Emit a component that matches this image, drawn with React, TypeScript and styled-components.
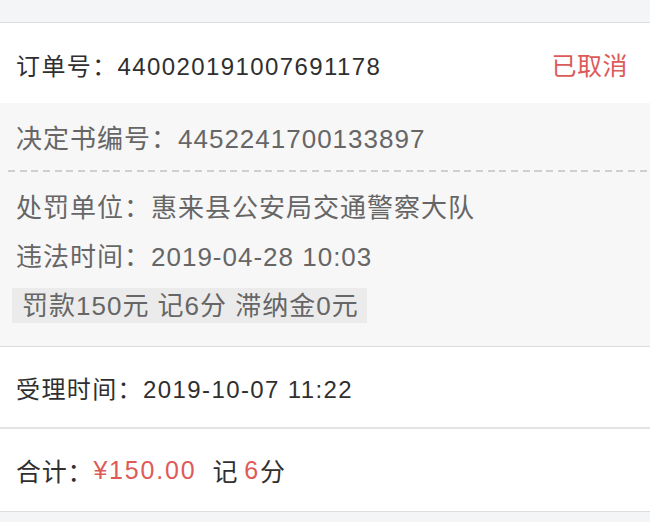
import styled, { createGlobalStyle } from "styled-components";

const Global = createGlobalStyle`
    html, body {
        margin: 0;
        padding: 0;
        background: #f4f5f7;
    }
    body {
        font-family: "Liberation Sans", "Noto Sans CJK SC", sans-serif;
    }
`;

const Page = styled.div`
    width: 650px;
    height: 522px;
    overflow: hidden;
    background: #f4f5f7;
`;

const TopBar = styled.div`
    height: 22px;
    background: #f3f5f7;
    border-bottom: 1px solid #dcdee0;
`;

const Row = styled.div<{ h: number; pt?: number }>`
    height: ${(p) => p.h}px;
    padding: ${(p) => p.pt ?? 0}px 22px 0 16px;
    box-sizing: border-box;
    background: #fff;
    display: flex;
    align-items: center;
    justify-content: space-between;
    font-size: 24px;
    letter-spacing: 1.4px;
    color: #2f2f2f;
`;

const Status = styled.span`
    color: #dc5b58;
    font-size: 25px;
    letter-spacing: 0.5px;
`;

const Detail = styled.div`
    background: #f7f7f7;
    color: #666;
    font-size: 26px;
    letter-spacing: 1px;
    padding-bottom: 23px;
    border-bottom: 1px solid #dcdcdc;
`;

const DetailLine = styled.div<{ h: number }>`
    height: ${(p) => p.h}px;
    padding-left: 16px;
    display: flex;
    align-items: center;
`;

const Dashed = styled.div`
    height: 2px;
    margin: 0 0 0 8px;
    background: repeating-linear-gradient(
        to right,
        #cfcfcf 0 7px,
        transparent 7px 11.7px
    );
`;

const Tag = styled.div`
    margin: 18px 0 0 12px;
    height: 35px;
    width: max-content;
    padding: 0 8px 0 10px;
    background: #ebebeb;
    display: flex;
    align-items: center;
    line-height: 1;
`;

const Divider = styled.div`
    height: 2px;
    background: #e4e4e6;
`;

const Red = styled.span`
    color: #dc5b58;
    letter-spacing: 1.8px;
`;

const Total = styled.div`
    display: flex;
    align-items: center;
    font-size: 25px;
    letter-spacing: 0.8px;
`;

const Gap = styled.span<{ w: number }>`
    display: inline-block;
    width: ${(p) => p.w}px;
`;

const BottomBorder = styled.div`
    height: 1px;
    background: #dcdee0;
`;

export default function App() {
    return (
        <Page>
            <Global />
            <TopBar />
            <Row h={80} pt={2}>
                <span>订单号：440020191007691178</span>
                <Status>已取消</Status>
            </Row>
            <Detail>
                <DetailLine h={67}>决定书编号：4452241700133897</DetailLine>
                <Dashed />
                <DetailLine h={66}>处罚单位：惠来县公安局交通警察大队</DetailLine>
                <DetailLine h={32}>违法时间：2019-04-28 10:03</DetailLine>
                <Tag>罚款150元 记6分 滞纳金0元</Tag>
            </Detail>
            <Row h={80}>
                <span>受理时间：2019-10-07 11:22</span>
            </Row>
            <Divider />
            <Row h={82}>
                <Total>
                    合计：<Red>¥150.00</Red>
                    <Gap w={16} />记<Gap w={6} />
                    <Red>6</Red>分
                </Total>
            </Row>
            <BottomBorder />
        </Page>
    );
}
